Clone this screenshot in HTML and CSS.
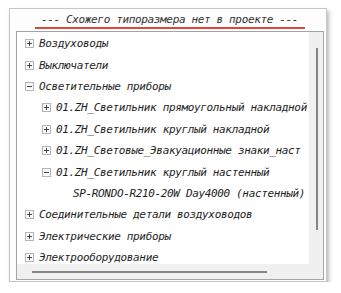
FILE: index.html
```html
<!DOCTYPE html>
<html lang="ru">
<head>
<meta charset="utf-8">
<link rel="stylesheet" href="styles.css">
</head>
<body>
<div class="panel">
  <div class="title"><span class="title-text">--- Схожего типоразмера нет в проекте ---</span></div>
  <div class="tree">
    <div class="content">
      <div class="row l1"><svg class="ic" viewBox="0 0 9 9"><rect x="0.5" y="0.5" width="8" height="8" fill="#fafafa" stroke="#b4b4b4"/><path d="M2 4.5h5M4.5 2v5" stroke="#444" stroke-width="1"/></svg><span>Воздуховоды</span></div>
      <div class="row l1"><svg class="ic" viewBox="0 0 9 9"><rect x="0.5" y="0.5" width="8" height="8" fill="#fafafa" stroke="#b4b4b4"/><path d="M2 4.5h5M4.5 2v5" stroke="#444" stroke-width="1"/></svg><span>Выключатели</span></div>
      <div class="row l1"><svg class="ic" viewBox="0 0 9 9"><rect x="0.5" y="0.5" width="8" height="8" fill="#fafafa" stroke="#b4b4b4"/><path d="M2 4.5h5" stroke="#444" stroke-width="1"/></svg><span>Осветительные приборы</span></div>
      <div class="row l2"><svg class="ic" viewBox="0 0 9 9"><rect x="0.5" y="0.5" width="8" height="8" fill="#fafafa" stroke="#b4b4b4"/><path d="M2 4.5h5M4.5 2v5" stroke="#444" stroke-width="1"/></svg><span>01.ZH_Светильник прямоугольный накладной</span></div>
      <div class="row l2"><svg class="ic" viewBox="0 0 9 9"><rect x="0.5" y="0.5" width="8" height="8" fill="#fafafa" stroke="#b4b4b4"/><path d="M2 4.5h5M4.5 2v5" stroke="#444" stroke-width="1"/></svg><span>01.ZH_Светильник круглый накладной</span></div>
      <div class="row l2"><svg class="ic" viewBox="0 0 9 9"><rect x="0.5" y="0.5" width="8" height="8" fill="#fafafa" stroke="#b4b4b4"/><path d="M2 4.5h5M4.5 2v5" stroke="#444" stroke-width="1"/></svg><span>01.ZH_Световые_Эвакуационные знаки_наст</span></div>
      <div class="row l2"><svg class="ic" viewBox="0 0 9 9"><rect x="0.5" y="0.5" width="8" height="8" fill="#fafafa" stroke="#b4b4b4"/><path d="M2 4.5h5" stroke="#444" stroke-width="1"/></svg><span>01.ZH_Светильник круглый настенный</span></div>
      <div class="row l3"><span class="ic-space"></span><span>SP-RONDO-R210-20W Day4000 (настенный)</span></div>
      <div class="row l1"><svg class="ic" viewBox="0 0 9 9"><rect x="0.5" y="0.5" width="8" height="8" fill="#fafafa" stroke="#b4b4b4"/><path d="M2 4.5h5M4.5 2v5" stroke="#444" stroke-width="1"/></svg><span>Соединительные детали воздуховодов</span></div>
      <div class="row l1"><svg class="ic" viewBox="0 0 9 9"><rect x="0.5" y="0.5" width="8" height="8" fill="#fafafa" stroke="#b4b4b4"/><path d="M2 4.5h5M4.5 2v5" stroke="#444" stroke-width="1"/></svg><span>Электрические приборы</span></div>
      <div class="row l1"><svg class="ic" viewBox="0 0 9 9"><rect x="0.5" y="0.5" width="8" height="8" fill="#fafafa" stroke="#b4b4b4"/><path d="M2 4.5h5M4.5 2v5" stroke="#444" stroke-width="1"/></svg><span>Электрооборудование</span></div>
    </div>
    <div class="vscroll"><div class="vthumb"></div></div>
    <div class="hscroll"><div class="hthumb"></div></div>
    <div class="corner"></div>
  </div>
</div>
</body>
</html>
```

FILE: styles.css
```css
html, body {
  margin: 0;
  padding: 0;
  background: #ffffff;
}
body {
  padding: 8px 0 0 9px;
  font-family: "DejaVu Sans Mono", monospace;
  font-style: oblique;
  font-size: 11px;
  letter-spacing: -0.35px;
  color: #1e1e1e;
}
.panel {
  box-sizing: border-box;
  width: 318px;
  height: 274px;
  border: 1px solid #c6c6c6;
  box-shadow: 2px 3px 4px rgba(0, 0, 0, 0.28);
  background: #fdfdfd;
  padding: 0 2px 1px 6px;
  display: flex;
  flex-direction: column;
}
.title {
  height: 22px;
  display: flex;
  justify-content: center;
  flex-shrink: 0;
}
.title-text {
  display: block;
  margin-top: 4px;
  height: 14px;
  line-height: 14px;
  padding: 0 7px 0 6px;
  border-bottom: 2px solid #d8483c;
  color: #333;
}
.tree {
  flex: 1;
  border: 1px solid #a3a3a8;
  background: #ffffff;
  display: grid;
  grid-template-columns: 1fr 14px;
  grid-template-rows: 1fr 15px;
  min-height: 0;
}
.content {
  overflow: hidden;
  padding-top: 1px;
  min-width: 0;
}
.row {
  height: 21.4px;
  display: flex;
  align-items: center;
  white-space: nowrap;
}
.row.l1 { padding-left: 8px; }
.row.l2 { padding-left: 25px; }
.row.l3 { padding-left: 42px; }
.ic, .ic-space {
  width: 9px;
  height: 9px;
  flex-shrink: 0;
  margin-right: 5px;
}
.vscroll {
  background: #f0f0f0;
}
.vthumb {
  margin: 16px 0 0 7px;
  width: 2px;
  height: 182px;
  background: #858585;
}
.hscroll {
  background: #f0f0f0;
  display: flex;
  align-items: center;
}
.hthumb {
  margin-left: 15px;
  width: 235px;
  height: 2px;
  background: #858585;
}
.corner {
  background: #f0f0f0;
}
```
